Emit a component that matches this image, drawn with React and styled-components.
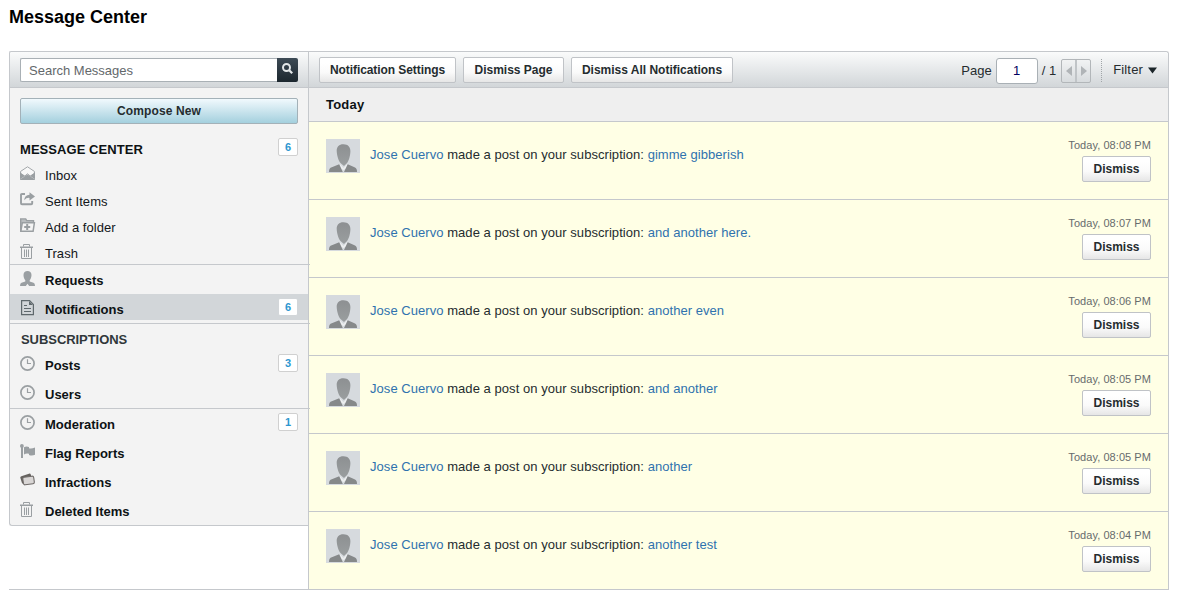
import React from 'react';
import styled, { createGlobalStyle, css } from 'styled-components';

const line = '#c5c8cc';

const GlobalStyle = createGlobalStyle`
  * { box-sizing: border-box; }
  body {
    margin: 0;
    background: #fff;
    color: #252c2f;
    font: 13px/18px "Liberation Sans", Arial, sans-serif;
  }
  button, input { font-family: inherit; margin: 0; }
`;

const Page = styled.main`
  padding: 6px 16px 0 9px;
`;

const Title = styled.h1`
  margin: 0 0 23px;
  font-size: 18px;
  line-height: 22px;
  color: #000;
`;

const Shell = styled.div`
  display: flex;
  width: 1160px;
  height: 539px;
  border-bottom: 1px solid ${line};
`;

const Sidebar = styled.aside`
  width: 299px;
  flex: none;
`;

const Content = styled.section`
  flex: 1;
  border: 1px solid ${line};
  border-bottom: 0;
  border-radius: 0 3px 0 0;
`;

const barStyle = css`
  display: flex;
  background: linear-gradient(#fafbfb, #d2d6d9);
  border-bottom: 1px solid ${line};
`;

const SearchBar = styled.div`
  ${barStyle}
  height: 37px;
  padding: 6px 10px 0;
  border-top: 1px solid ${line};
  border-left: 1px solid ${line};
  border-radius: 2px 0 0 0;
`;

const SearchInput = styled.input`
  flex: 1;
  min-width: 0;
  height: 24px;
  padding: 0 8px;
  border: 1px solid #a9b0b5;
  border-right: 0;
  border-radius: 2px 0 0 2px;
  background: #fff;
  font-size: 13px;
  &::placeholder { color: #63686b; opacity: 1; }
`;

const SearchButton = styled.button`
  display: flex;
  align-items: flex-start;
  width: 21px;
  height: 24px;
  padding: 5px 0 0 5px;
  border: 0;
  border-radius: 0 2px 2px 0;
  background: linear-gradient(#3d4a55, #1c272f);
`;

const SideBody = styled.nav`
  padding-top: 10px;
  background: #f3f3f3;
  border-left: 1px solid ${line};
  border-bottom: 1px solid ${line};
  border-radius: 0 0 0 3px;
`;

const Compose = styled.button`
  display: block;
  width: 278px;
  height: 26px;
  margin: 0 10px 12px;
  padding: 0;
  border: 1px solid #a3b1b8;
  border-radius: 2px;
  background: linear-gradient(#f1f9fd, #a4d0de);
  font-size: 12px;
  line-height: 23px;
  font-weight: bold;
  letter-spacing: 0.12px;
  color: #252c2f;
`;

const Heading = styled.div`
  display: flex;
  justify-content: space-between;
  height: 26px;
  padding: ${(p) => (p.$lower ? '2px 10px 0 11px' : '0 10px')};
  line-height: 28px;
  font-weight: bold;
  color: ${(p) => (p.$lower ? '#30373a' : '#0d1214')};
  letter-spacing: ${(p) => (p.$lower ? -0.06 : 0.06)}px;
`;

const Folder = styled.a`
  display: flex;
  align-items: flex-start;
  height: ${(p) => (p.$last ? 24 : 26)}px;
  padding: 0 10px;
  line-height: 28px;
  color: #121619;
  letter-spacing: 0.04px;
  svg { flex: none; margin: 4px 9px 0 0; }
`;

const Item = styled.a`
  display: flex;
  align-items: flex-start;
  height: 26px;
  margin-bottom: 3px;
  padding: 0 10px;
  background: ${(p) => (p.$active ? '#d2d6d9' : 'transparent')};
  font-weight: bold;
  color: #0d1214;
  svg { flex: none; margin: 6px 9px 0 0; }
`;

const ItemLabel = styled.span`
  flex: 1;
  padding-top: 3px;
  line-height: 26px;
`;

const Badge = styled.span`
  width: 20px;
  height: 18px;
  margin-top: ${(p) => p.$top ?? 4}px;
  border: 1px solid ${(p) => (p.$plain ? '#d2d6d9' : '#d0d0d0')};
  border-radius: 2px;
  background: #fff;
  color: #2e97d0;
  font-size: 11px;
  font-weight: bold;
  line-height: 17px;
  text-align: center;
`;

const Rule = styled.hr`
  position: relative;
  height: 1px;
  margin: 0 -2px 0 0;
  border: 0;
  background: ${line};
`;

const Toolbar = styled.div`
  ${barStyle}
  height: 36px;
  padding: 5px 11px 0 10px;
  gap: 7px;
  border-radius: 0 3px 0 0;
`;

const Button = styled.button`
  width: ${(p) => p.$w}px;
  height: 26px;
  padding: 0;
  border: 1px solid #c0c3c7;
  border-radius: 2px;
  background: linear-gradient(#fff 20%, #fafafa 60%, #e6e6e6);
  color: #252c2f;
  font-size: 12px;
  line-height: 24px;
  font-weight: bold;
  white-space: nowrap;
  letter-spacing: ${(p) => p.$tracking ?? 0}px;
`;

const Pager = styled.div`
  display: flex;
  align-items: flex-start;
  margin-left: auto;
  line-height: 27px;
`;

const PageInput = styled.input`
  width: 42px;
  height: 26px;
  margin: 1px 4px 0;
  padding: 0 0 2px;
  border: 1px solid #a9b0b5;
  border-radius: 3px;
  background: #fff;
  color: #000060;
  font-size: 13px;
  text-align: center;
`;

const Arrows = styled.div`
  display: flex;
  width: 30px;
  height: 24px;
  margin: 2px 10px 0 5px;
  border: 1px solid #b2b6b9;
  border-radius: 2px;
`;

const Arrow = styled.span`
  display: flex;
  align-items: center;
  justify-content: center;
  width: ${(p) => (p.$first ? 15 : 13)}px;
  border-right: ${(p) => (p.$first ? '2px solid #c0c4c7' : '0')};
`;

const Filter = styled.div`
  display: flex;
  height: 23px;
  margin-top: 2px;
  padding-left: 11px;
  border-left: 1px dotted #a0a5a8;
  line-height: 22px;
  letter-spacing: 0.15px;
  svg { margin: 8px 0 0 5px; }
`;

const DayHeader = styled.div`
  height: 34px;
  padding-left: 17px;
  border-bottom: 1px solid ${line};
  background: #efefef;
  font-weight: bold;
  line-height: 33px;
  letter-spacing: 0.2px;
  color: #0d1214;
`;

const Notice = styled.article`
  display: flex;
  height: 78px;
  padding: 17px 17px 0;
  border-bottom: 1px solid ${line};
  background: #ffffe5;
  &:last-child { height: 77px; border-bottom: 0; }
`;

const Message = styled.p`
  flex: 1;
  margin: 7px 0 0 10px;
  letter-spacing: 0.05px;
`;

const Link = styled.a`
  color: #2f72ae;
`;

const NoticeSide = styled.div`
  display: flex;
  flex-direction: column;
  align-items: flex-end;
`;

const Time = styled.time`
  height: 17px;
  color: #676b6d;
  font-size: 11px;
  line-height: 13px;
  letter-spacing: 0.06px;
`;

const Svg = ({ children, color = '#9a9fa2' }) => (
  <svg width="16" height="16" viewBox="0 0 16 16" fill={color} stroke="none">{children}</svg>
);

const icons = {
  inbox: (
    <Svg>
      <path d="M.6 5.400 7.500.8l6.900 4.600v2.400L10.200 10 7.500 7.800 4.800 10 .6 7.800Z" fill="#f8f8f8" stroke="#a3a7aa" strokeWidth="1" />
      <path d="M0 6.300 4.800 10 0 13.200ZM15 6.300 10.200 10l4.800 3.200ZM0 14v-.4L7.500 8.500l7.500 5.100V14Z" />
    </Svg>
  ),
  sent: (
    <Svg>
      <path d="M5 2H2Q1 2 1 3v8.200q0 1 1 1h9.200q1 0 1-1V9" fill="none" stroke="#9a9fa2" strokeWidth="1.900" />
      <path d="M4.200 8.300Q4.500 2.800 9.500 2.700V.3L15 4.500 9.500 8.500V5.900Q6.500 5.500 4.200 8.300Z" />
    </Svg>
  ),
  folder: (
    <Svg>
      <path d="M.7 13V.9h5l1 1.700h6.800v2" fill="#b9bdbf" stroke="#9a9fa2" strokeWidth="1.400" />
      <path d="M.8 13.300 2.300 4.800h12.100l-1.300 8.500Z" fill="#f4f4f4" stroke="#9a9fa2" strokeWidth="1.500" />
      <path d="M6.200 6h2v2h2v2h-2v2h-2v-2h-2V8h2Z" />
    </Svg>
  ),
  trash: (
    <Svg>
      <path d="M3.500 2.500v-2h6v2M1.500 4v10.500h10V4M4.500 5.500v7.500M6.500 5.500v7.500M8.500 5.500v7.500" fill="none" stroke="#9a9fa2" />
      <path d="M0 2.500h13v1.500H0Z" />
    </Svg>
  ),
  requests: (
    <Svg>
      <path d="M3.500 4C3.500 1.500 5.200 0 7.500 0s4 1.500 4 4c0 2-.8 4.300-1.800 5.300v1.200l3.800 1.300q1.500.6 1.500 3.200H9.200L7.500 12.800 5.800 15H0q0-2.600 1.500-3.200l3.800-1.300V9.300C4.300 8.300 3.500 6 3.500 4Z" />
    </Svg>
  ),
  notifications: (
    <Svg color="#5f686c">
      <path d="M1.600.6h8l3.800 3.800v10.200H1.600Z" fill="none" stroke="#5f686c" strokeWidth="1.200" />
      <path d="M9 1v4h4ZM4 5h3v1H4ZM4 8h7v1H4ZM4 11h7v1H4Z" />
    </Svg>
  ),
  clock: (
    <Svg>
      <circle cx="7.500" cy="7.500" r="6.600" fill="none" stroke="#9a9fa2" strokeWidth="1.700" />
      <path d="M7.500 3.200v4.300H11" fill="none" stroke="#9a9fa2" strokeWidth="1.200" />
    </Svg>
  ),
  flag: (
    <Svg>
      <circle cx="1.900" cy="1.900" r="1.900" />
      <path d="M1 2h2v12H1ZM4 3.200Q6.500 1.800 9 3v1.200q2 1 6-.6v7.200q-3 1.300-6 .2V9.800q-2.500-.8-5 .6Z" />
    </Svg>
  ),
  cards: (
    <Svg>
      <rect x="1" y="1.600" width="11" height="7.800" rx="1.500" transform="rotate(-18 7 6)" fill="#66625f" />
      <rect x="3" y="3.700" width="11" height="7.600" rx="1.500" transform="rotate(-8 8.500 7)" fill="#d9d6d5" stroke="#6e6a68" strokeWidth="1.100" />
    </Svg>
  ),
};

const Avatar = () => (
  <svg width="34" height="34" viewBox="0 0 34 34">
    <defs>
      <linearGradient id="face" x1="0" y1="0" x2="0" y2="1">
        <stop offset="0" stopColor="#8d9092" />
        <stop offset="1" stopColor="#9a9e9f" />
      </linearGradient>
    </defs>
    <rect width="34" height="34" fill="#d6dade" />
    <path d="M10.700 12C10.500 7.500 13.500 5 17.500 5.200c4.500 0 7 2.800 6.900 7-.1 4.500-1.500 9.500-3.300 11.800L18 27l-3-2.500C12.500 22 10.900 16.500 10.700 12Z" fill="url(#face)" />
    <path d="M13.200 24.500 17.400 29l4.300-4.500L20 29.500 17.400 31 15 29.500Z" fill="#eceeef" />
    <path d="M3 33c0-3 .8-4 2.800-4.700l7.400-3L16.800 33ZM18 33l3.700-7.700 6.800 3C30.500 29.200 31 30.500 31 33Z" fill="#86898a" />
  </svg>
);

const folders = [
  ['inbox', 'Inbox'],
  ['sent', 'Sent Items'],
  ['folder', 'Add a folder'],
  ['trash', 'Trash'],
];

const notices = [
  ['gimme gibberish', '08:08'],
  ['and another here.', '08:07'],
  ['another even', '08:06'],
  ['and another', '08:05'],
  ['another', '08:05'],
  ['another test', '08:04'],
];

const NavItem = ({ icon, label, count, active }) => (
  <Item $active={active}>
    {icons[icon]}
    <ItemLabel>{label}</ItemLabel>
    {count && <Badge $plain={active}>{count}</Badge>}
  </Item>
);

export default function App() {
  return (
    <Page>
      <GlobalStyle />
      <Title>Message Center</Title>
      <Shell>
        <Sidebar>
          <SearchBar>
            <SearchInput placeholder="Search Messages" />
            <SearchButton aria-label="Search">
              <svg width="12" height="13" viewBox="0 0 12 13" fill="none" stroke="#e2e6e8">
                <circle cx="4.500" cy="4.500" r="3.500" strokeWidth="2" />
                <path d="M7.200 7.200 10.200 10.300" strokeWidth="2.200" />
              </svg>
            </SearchButton>
          </SearchBar>
          <SideBody>
            <Compose>Compose New</Compose>
            <Heading>
              MESSAGE CENTER
              <Badge $top={2}>6</Badge>
            </Heading>
            {folders.map(([icon, label]) => (
              <Folder key={icon} $last={icon === 'trash'}>
                {icons[icon]}
                {label}
              </Folder>
            ))}
            <Rule />
            <NavItem icon="requests" label="Requests" />
            <NavItem icon="notifications" label="Notifications" count="6" active />
            <Rule />
            <Heading $lower>SUBSCRIPTIONS</Heading>
            <NavItem icon="clock" label="Posts" count="3" />
            <NavItem icon="clock" label="Users" />
            <Rule />
            <NavItem icon="clock" label="Moderation" count="1" />
            <NavItem icon="flag" label="Flag Reports" />
            <NavItem icon="cards" label="Infractions" />
            <NavItem icon="trash" label="Deleted Items" />
          </SideBody>
        </Sidebar>
        <Content>
          <Toolbar>
            <Button $w={137} $tracking={-0.08}>Notification Settings</Button>
            <Button $w={101}>Dismiss Page</Button>
            <Button $w={162}>Dismiss All Notifications</Button>
            <Pager>
              Page
              <PageInput defaultValue="1" />
              / 1
              <Arrows>
                <Arrow $first>
                  <svg width="6" height="10"><path d="M6 0v10L0 5Z" fill="#b0b4b7" /></svg>
                </Arrow>
                <Arrow>
                  <svg width="6" height="10"><path d="M0 0v10L6 5Z" fill="#b0b4b7" /></svg>
                </Arrow>
              </Arrows>
              <Filter>
                Filter
                <svg width="9" height="7"><path d="M0 .5h9L4.500 6.500Z" fill="#1b2529" /></svg>
              </Filter>
            </Pager>
          </Toolbar>
          <DayHeader>Today</DayHeader>
          <div>
            {notices.map(([topic, time]) => (
              <Notice key={topic}>
                <Avatar />
                <Message>
                  <Link>Jose Cuervo</Link> made a post on your subscription: <Link>{topic}</Link>
                </Message>
                <NoticeSide>
                  <Time>Today, {time} PM</Time>
                  <Button $w={69}>Dismiss</Button>
                </NoticeSide>
              </Notice>
            ))}
          </div>
        </Content>
      </Shell>
    </Page>
  );
}
